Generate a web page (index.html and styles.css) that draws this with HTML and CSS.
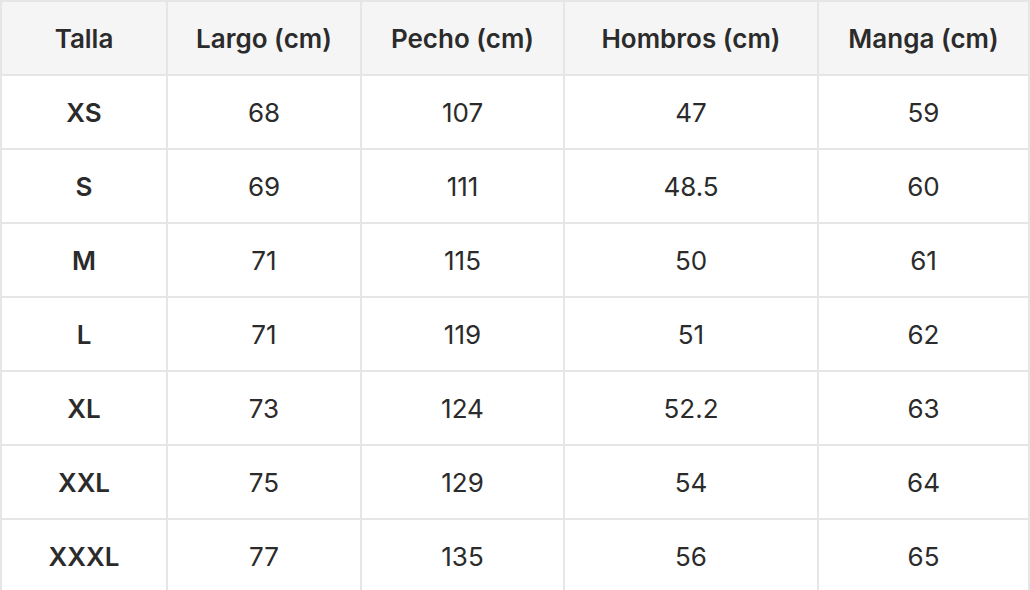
FILE: index.html
```html
<!DOCTYPE html>
<html lang="es">
<head>
<meta charset="utf-8">
<title>Guía de tallas</title>
<link rel="stylesheet" href="styles.css">
</head>
<body>
<table class="size-table">
  <colgroup>
    <col class="c1"><col class="c2"><col class="c3"><col class="c4"><col class="c5">
  </colgroup>
  <thead>
    <tr><th>Talla</th><th>Largo (cm)</th><th>Pecho (cm)</th><th>Hombros (cm)</th><th>Manga (cm)</th></tr>
  </thead>
  <tbody>
    <tr><td class="size">XS</td><td>68</td><td>107</td><td>47</td><td>59</td></tr>
    <tr><td class="size">S</td><td>69</td><td>111</td><td>48.5</td><td>60</td></tr>
    <tr><td class="size">M</td><td>71</td><td>115</td><td>50</td><td>61</td></tr>
    <tr><td class="size">L</td><td>71</td><td>119</td><td>51</td><td>62</td></tr>
    <tr><td class="size">XL</td><td>73</td><td>124</td><td>52.2</td><td>63</td></tr>
    <tr><td class="size">XXL</td><td>75</td><td>129</td><td>54</td><td>64</td></tr>
    <tr><td class="size">XXXL</td><td>77</td><td>135</td><td>56</td><td>65</td></tr>
  </tbody>
</table>
</body>
</html>
```
FILE: styles.css
```css
html, body {
  margin: 0;
  padding: 0;
  background: #ffffff;
}
body {
  font-family: Inter, "Noto Sans", "Liberation Sans", sans-serif;
  color: #2b2b2b;
}
.size-table {
  width: 1030px;
  table-layout: fixed;
  border-collapse: separate;
  border-spacing: 0;
  border-left: 2px solid #e6e6e6;
  border-top: 2px solid #e6e6e6;
}
.c1 { width: 166px; }
.c2 { width: 194px; }
.c3 { width: 203px; }
.c4 { width: 254px; }
.c5 { width: 211px; }
.size-table th,
.size-table td {
  height: 70px;
  padding: 2px 0 0;
  text-align: center;
  vertical-align: middle;
  border-right: 2px solid #e6e6e6;
  border-bottom: 2px solid #e6e6e6;
  font-size: 26px;
  line-height: 30px;
}
.size-table th {
  background: #f5f5f5;
  font-weight: 600;
}
.size-table td {
  font-weight: 400;
}
.size-table td.size {
  font-weight: 600;
}
```
